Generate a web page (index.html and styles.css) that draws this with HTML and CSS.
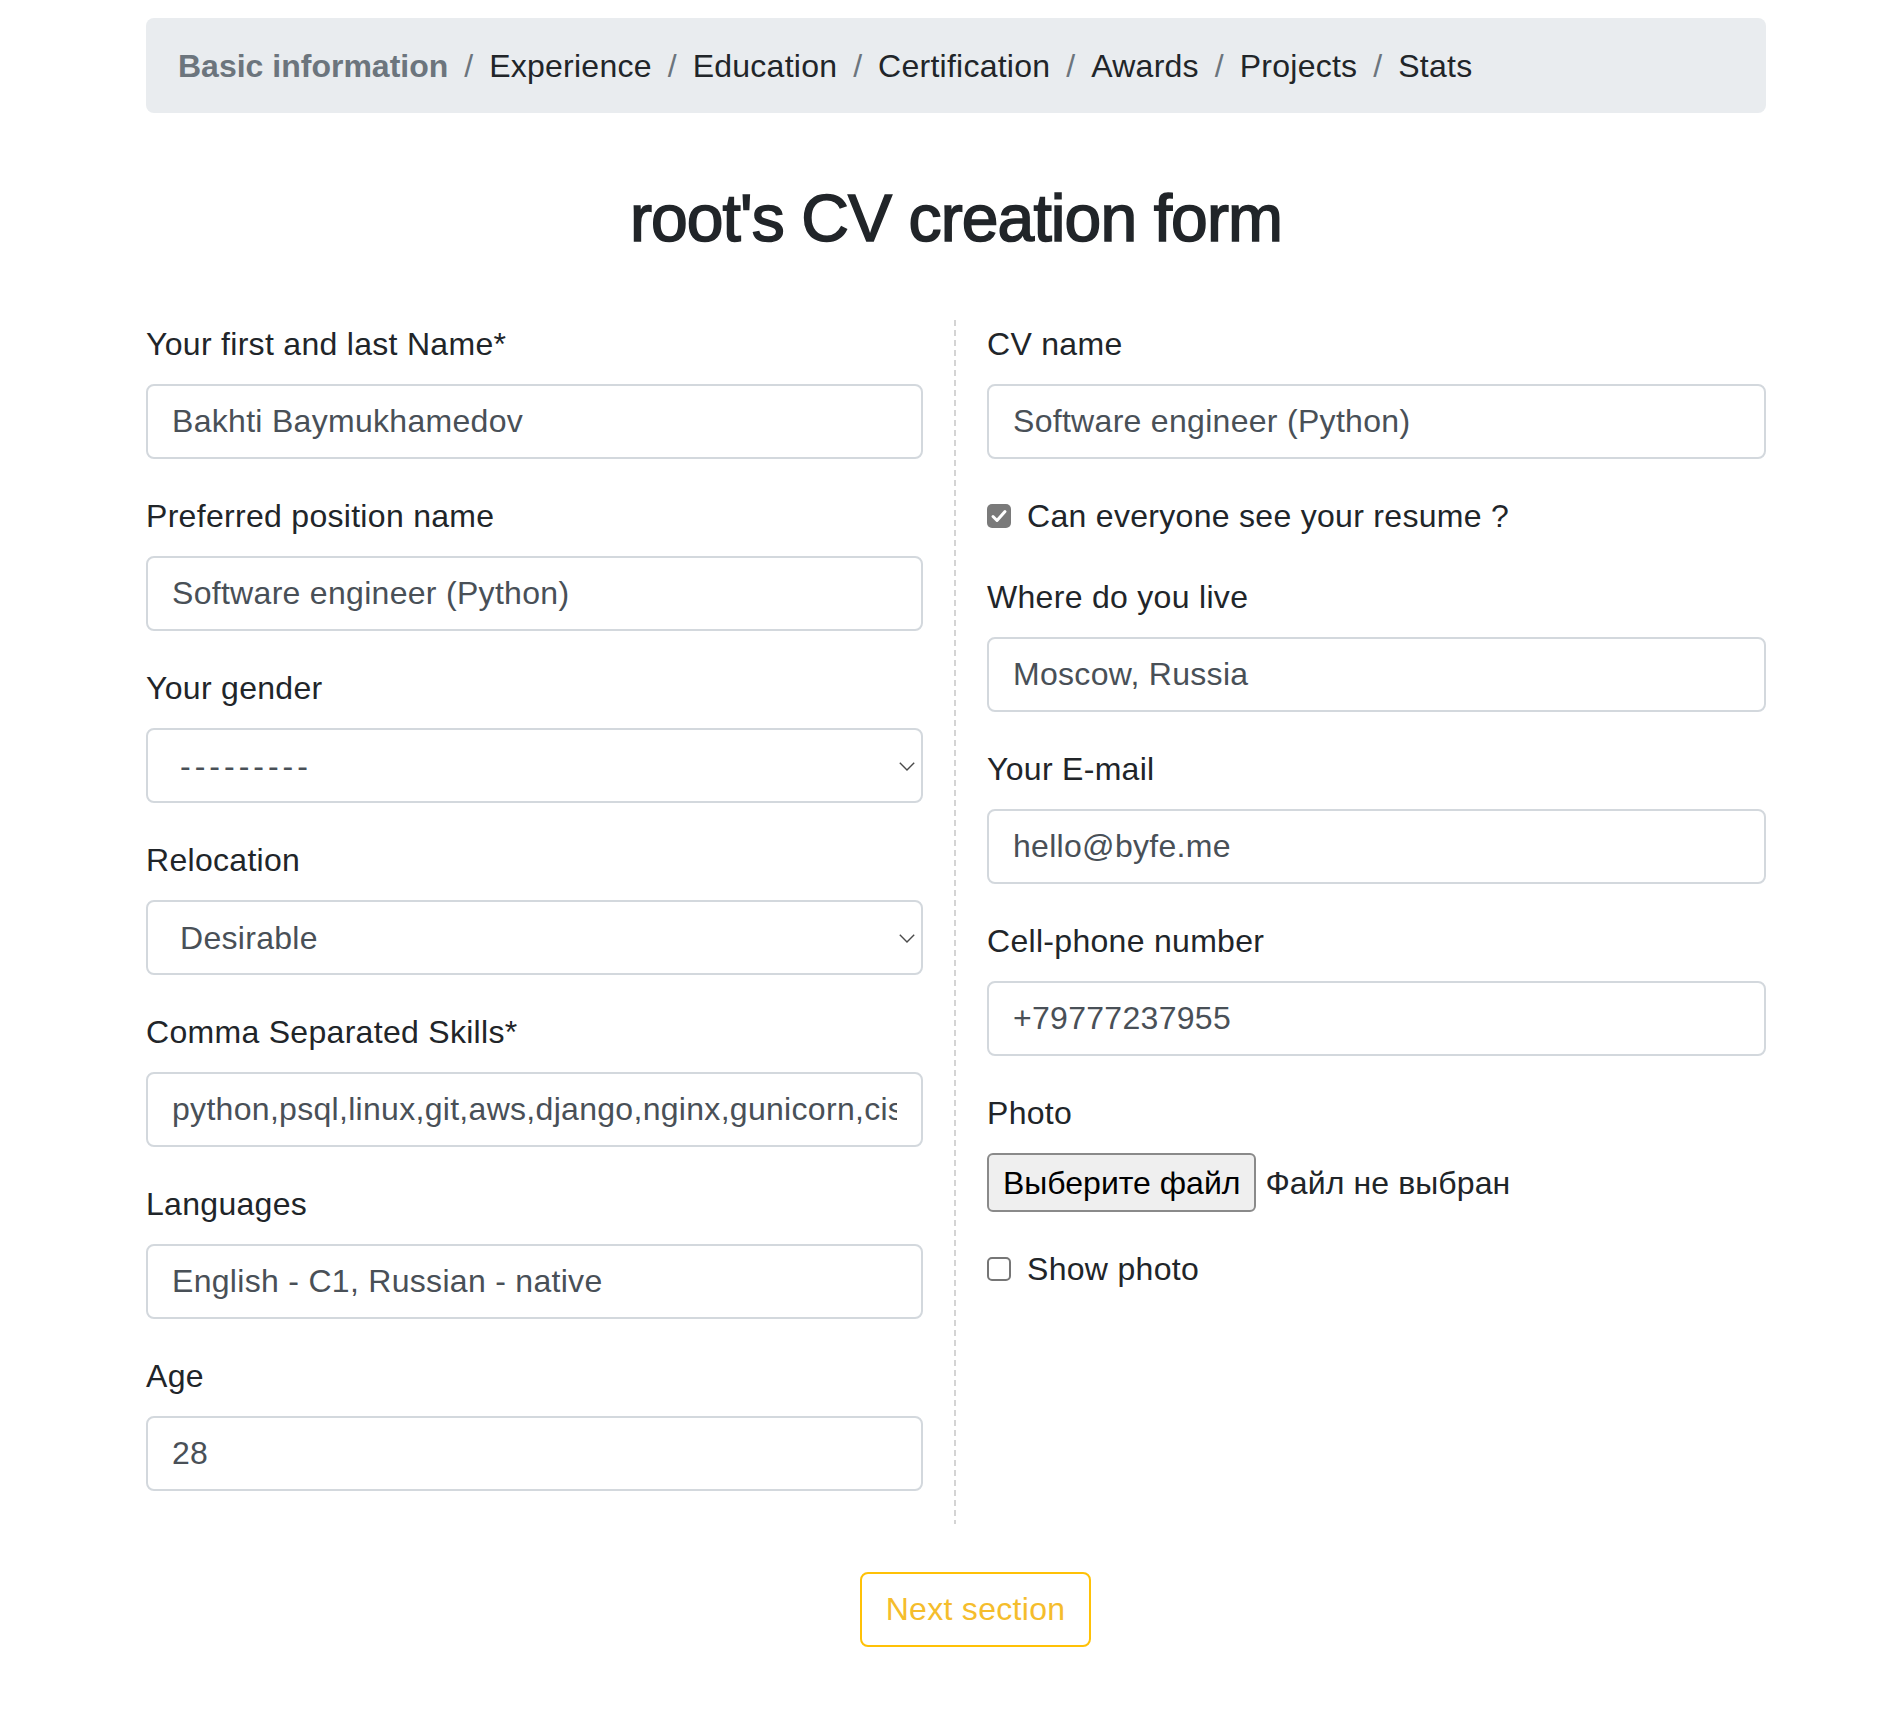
FILE: index.html
```html
<!DOCTYPE html>
<html lang="en">
<head>
<meta charset="utf-8">
<title>root's CV creation form</title>
<link rel="stylesheet" href="styles.css">
</head>
<body>
<div class="page">
  <nav class="crumbs">
    <span class="crumb active">Basic information</span>
    <span class="sep">/</span>
    <a class="crumb" href="#">Experience</a>
    <span class="sep">/</span>
    <a class="crumb" href="#">Education</a>
    <span class="sep">/</span>
    <a class="crumb" href="#">Certification</a>
    <span class="sep">/</span>
    <a class="crumb" href="#">Awards</a>
    <span class="sep">/</span>
    <a class="crumb" href="#">Projects</a>
    <span class="sep">/</span>
    <a class="crumb" href="#">Stats</a>
  </nav>

  <h1 class="title">root's CV creation form</h1>

  <form class="cv-form">
    <div class="cols">
      <div class="col">
        <div class="group">
          <label class="label">Your first and last Name*</label>
          <input class="control" type="text" value="Bakhti Baymukhamedov">
        </div>
        <div class="group">
          <label class="label">Preferred position name</label>
          <input class="control" type="text" value="Software engineer (Python)">
        </div>
        <div class="group">
          <label class="label">Your gender</label>
          <div class="select-wrap">
            <select class="control select dashes"><option>---------</option></select>
            <svg class="chevron" viewBox="0 0 16 9" width="16" height="9"><path d="M0.8 0.8L8 8L15.2 0.8" fill="none" stroke="#4a4a4a" stroke-width="1.4"/></svg>
          </div>
        </div>
        <div class="group">
          <label class="label">Relocation</label>
          <div class="select-wrap">
            <select class="control select"><option>Desirable</option></select>
            <svg class="chevron" viewBox="0 0 16 9" width="16" height="9"><path d="M0.8 0.8L8 8L15.2 0.8" fill="none" stroke="#4a4a4a" stroke-width="1.4"/></svg>
          </div>
        </div>
        <div class="group">
          <label class="label">Comma Separated Skills*</label>
          <input class="control" type="text" value="python,psql,linux,git,aws,django,nginx,gunicorn,cisco,docker">
        </div>
        <div class="group">
          <label class="label">Languages</label>
          <input class="control" type="text" value="English - C1, Russian - native">
        </div>
        <div class="group">
          <label class="label">Age</label>
          <input class="control" type="text" value="28">
        </div>
      </div>

      <div class="divider"></div>

      <div class="col">
        <div class="group">
          <label class="label">CV name</label>
          <input class="control" type="text" value="Software engineer (Python)">
        </div>
        <div class="check">
          <span class="box on"><svg viewBox="0 0 24 24" width="24" height="24"><path d="M6 12.5L10 16.5L18 7.5" fill="none" stroke="#fff" stroke-width="3" stroke-linecap="round" stroke-linejoin="round"/></svg></span>
          <span>Can everyone see your resume ?</span>
        </div>
        <div class="group">
          <label class="label">Where do you live</label>
          <input class="control" type="text" value="Moscow, Russia">
        </div>
        <div class="group">
          <label class="label">Your E-mail</label>
          <input class="control" type="text" value="hello@byfe.me">
        </div>
        <div class="group">
          <label class="label">Cell-phone number</label>
          <input class="control" type="text" value="+79777237955">
        </div>
        <div class="group">
          <label class="label">Photo</label>
          <div class="file-row">
            <span class="file-btn">Выберите файл</span>
            <span class="file-name">Файл не выбран</span>
          </div>
        </div>
        <div class="check">
          <span class="box off"></span>
          <span>Show photo</span>
        </div>
      </div>
    </div>

    <div class="actions">
      <button class="btn-next" type="button">Next section</button>
    </div>
  </form>
</div>
</body>
</html>
```

FILE: styles.css
```css
* {
  box-sizing: border-box;
}

html,
body {
  margin: 0;
  background: #fff;
}

body {
  font-family: "Liberation Sans", Arial, sans-serif;
  font-size: 32px;
  line-height: 1.5;
  letter-spacing: 0.3px;
  color: #212529;
}

.page {
  width: 1620px;
  margin: 0 124px 0 auto;
  padding-top: 18px;
  padding-bottom: 79px;
}

/* breadcrumb */
.crumbs {
  display: flex;
  align-items: center;
  background: #e9ecef;
  border-radius: 8px;
  padding: 24px 32px 23px;
  line-height: 48px;
}

.crumb {
  color: #212529;
  text-decoration: none;
  letter-spacing: 0.25px;
}

.crumb.active {
  font-weight: 700;
  color: #6c757d;
  letter-spacing: 0;
}

.sep {
  color: #6c757d;
  padding: 0 16px;
  letter-spacing: 0;
}

/* title */
.title {
  margin: 66px 0 62px;
  font-size: 66px;
  line-height: 1.2;
  font-weight: 400;
  letter-spacing: -0.9px;
  -webkit-text-stroke: 1.6px #212529;
  text-align: center;
  color: #212529;
}

/* form columns */
.cols {
  display: grid;
  grid-template-columns: 777px 2px 1fr;
  column-gap: 31px;
}

.divider {
  background: repeating-linear-gradient(to bottom, #d4d4d4 0 6px, transparent 6px 10px);
}

.group {
  margin-bottom: 33px;
}

.label {
  display: block;
  line-height: 48px;
  margin-bottom: 16px;
}

.control {
  display: block;
  width: 100%;
  height: 75px;
  padding: 0 24px;
  border: 2px solid #d3d8dd;
  border-radius: 8px;
  background: #fff;
  font-family: inherit;
  font-size: 32px;
  letter-spacing: 0.3px;
  color: #495057;
  outline: none;
}

.select-wrap {
  position: relative;
}

.select {
  appearance: none;
  -webkit-appearance: none;
  padding-left: 32px;
  padding-right: 48px;
}

.dashes {
  letter-spacing: 4px;
}

.chevron {
  position: absolute;
  right: 8px;
  top: 50%;
  margin-top: -4px;
  pointer-events: none;
}

/* checkboxes */
.check {
  display: flex;
  align-items: center;
  gap: 16px;
  line-height: 48px;
  margin-bottom: 33px;
}

.box {
  flex: none;
  width: 24px;
  height: 24px;
  border-radius: 5px;
  display: block;
}

.box svg {
  display: block;
}

.box.on {
  background: #7a7a7a;
}

.box.off {
  background: #fff;
  border: 2px solid #767676;
}

/* file input */
.file-row {
  display: flex;
  align-items: center;
  height: 59px;
}

.file-btn {
  display: flex;
  align-items: center;
  height: 59px;
  padding: 0 14px;
  border: 2px solid #8a8a8a;
  border-radius: 6px;
  background: #efefef;
  color: #000;
  letter-spacing: 0;
}

.file-name {
  margin-left: 9px;
  letter-spacing: 0.1px;
}

/* action */
.actions {
  display: flex;
  justify-content: center;
  padding-left: 39px;
  margin-top: 48px;
}

.btn-next {
  height: 75px;
  padding: 0 24px;
  border: 2px solid #ffc107;
  border-radius: 8px;
  background: #fff;
  color: #f5bd2c;
  font-family: inherit;
  font-size: 32px;
  letter-spacing: 0.3px;
  cursor: pointer;
}
```
